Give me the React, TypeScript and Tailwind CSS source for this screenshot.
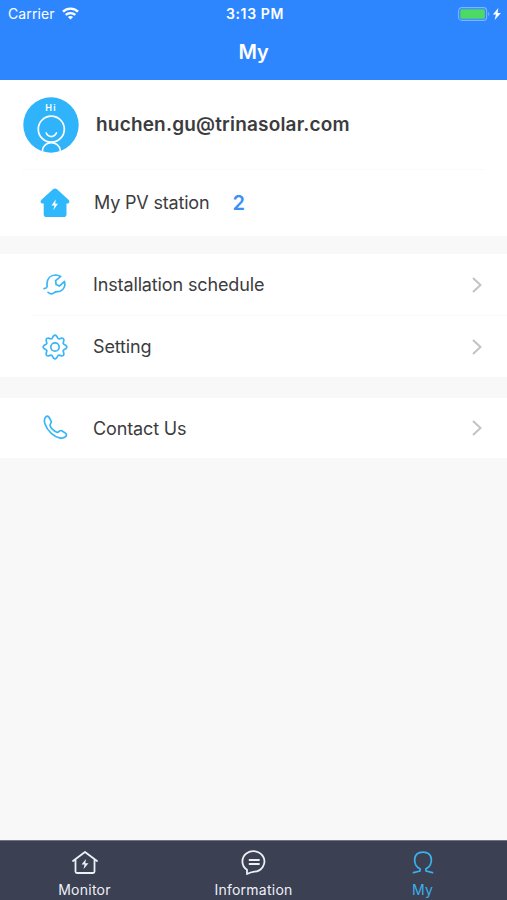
import type { ReactNode } from 'react'

// Eight rounded teeth around the centre of a 26x26 box
const GEAR_POINTS = Array.from({ length: 96 }, (_, i) => {
  const angle = (i / 96) * Math.PI * 2
  const radius = 10.4 + 1.45 * Math.cos(8 * angle)
  return `${(13 + radius * Math.cos(angle)).toFixed(2)},${(13 + radius * Math.sin(angle)).toFixed(2)}`
}).join(' ')

function WifiIcon() {
  return (
    <svg className="h-[13px] w-[17px]" viewBox="0 0 17 13" fill="none" stroke="#fff" strokeWidth="2.3">
      <path d="M1 4.600C5.200.5 11.800.5 16 4.600" />
      <path d="M3.700 7.900c2.700-2.500 6.900-2.500 9.600 0" />
      <path d="M8.500 12.500 5.900 9.900c1.500-1.200 3.700-1.200 5.200 0z" fill="#fff" stroke="none" />
    </svg>
  )
}

function BatteryIcon() {
  return (
    <svg className="h-[14px] w-[44px]" viewBox="0 0 44 14" fill="none">
      <rect x=".6" y=".6" width="28" height="12.800" rx="3.200" stroke="#7fb4ff" strokeWidth="1.100" />
      <rect x="2.300" y="2.300" width="24.600" height="9.400" rx="1.500" fill="#4cd964" />
      <path d="M30.200 5c1.500.5 1.500 3.500 0 4z" fill="#7fb4ff" />
      <path d="M40.300 1 34.900 7.600h3L36.700 13l6.200-7h-3.300z" fill="#fff" />
    </svg>
  )
}

function Avatar() {
  return (
    <div className="relative h-14 w-14 shrink-0">
      <svg className="h-14 w-14" viewBox="0 0 56 56" fill="none" stroke="#fff" strokeWidth="1.700" strokeLinecap="round">
        <circle cx="28" cy="28" r="27.700" fill="#2fb4fc" stroke="none" />
        <circle cx="28.300" cy="32.200" r="13" />
        <path d="M23.200 36c2.200 4.700 8 4.700 10.200 0" />
        <path d="M19.500 53.500c1-10.400 16.600-10.400 17.800 0" />
      </svg>
      <span className="absolute inset-x-0 top-[5px] text-center text-[9px] leading-3 font-semibold tracking-[1.2px] text-white">
        Hi
      </span>
    </div>
  )
}

function HouseIcon() {
  return (
    <svg className="h-[30px] w-[30px]" viewBox="0 0 30 30">
      <path
        d="M13 1.300Q15-.4 17 1.300L28.800 12.100Q30.400 14.500 28 15.400H26.500V26.200Q26.500 29 23.700 29H6.500Q3.700 29 3.700 26.200V15.400H2Q-.4 14.500 1.200 12.100Z"
        fill="#30b8fd"
      />
      <path d="M15.800 11.500 11.500 17.500h3l-1.200 4.800 4.600-6.500h-2.700z" fill="#fff" />
    </svg>
  )
}

function WrenchIcon() {
  return (
    <svg className="h-6 w-6" viewBox="0 0 24 24" fill="none" stroke="#38b6f8" strokeWidth="1.700" strokeLinecap="round" strokeLinejoin="round">
      <path d="M1 15.600C4.400 15.300 4.400 13.300 4 10.500 4.300 5.300 7.800 2.200 12.500 2c2 0 3.700.5 5.300 1.400L12.600 7.600l.5 4 3.200 1.500 5.200-4.600c1.300 4.300-.9 8.500-4.300 9.700-2.200.8-4-.3-5.700 1.200-1.800 1.700-4.300 1.800-6.400 0" />
    </svg>
  )
}

function GearIcon() {
  return (
    <svg className="h-[26px] w-[26px]" viewBox="0 0 26 26" fill="none" stroke="#38b6f8" strokeWidth="1.700" strokeLinejoin="round">
      <polygon points={GEAR_POINTS} />
      <circle cx="13" cy="13" r="4.200" />
    </svg>
  )
}

function PhoneIcon() {
  return (
    <svg className="h-[26px] w-[26px]" viewBox="0 0 26 26" fill="none" stroke="#38b6f8" strokeWidth="1.700" strokeLinejoin="round">
      <path d="M4 1.700C5.500.6 6.600 1.500 7.500 3l1.700 3.300c.7 1.400-1.200 2.300-1.200 4 .3 2.200 4.800 6.900 7.300 7.100 1.700 0 2.200-2.500 4-1.800l4 2.400c1.700 1.100 1.300 2.700.3 3.700-2.800 2.700-9 1.400-14.300-3.400C3.500 13 .3 4.900 4 1.700Z" />
    </svg>
  )
}

function Chevron() {
  return (
    <svg className="ml-auto h-[18px] w-[12px]" viewBox="0 0 12 18" fill="none" stroke="#c3c3c6" strokeWidth="2">
      <path d="m2 2 7.500 7L2 16" />
    </svg>
  )
}

function Row({ icon, label }: { icon: ReactNode; label: string }) {
  return (
    <div className="flex h-full items-center pr-6 pl-[35px]">
      <span className="flex w-[39px] justify-center">{icon}</span>
      <span className="ml-[19px] text-[18px] tracking-[-0.13px]">{label}</span>
      <Chevron />
    </div>
  )
}

const tabs = [
  {
    label: 'Monitor',
    color: 'text-[#eef0f6]',
    icon: (
      <>
        <path d="M2 12 14 3l12 9M4.500 11v11.500q0 1.500 1.500 1.500h16q1.500 0 1.500-1.500V11" />
        <path d="m15 10-4.500 5.500h3L12.600 20l4.900-5.800h-3.200z" fill="currentColor" stroke="none" />
      </>
    ),
  },
  {
    label: 'Information',
    color: 'text-[#eef0f6]',
    icon: (
      <>
        <path d="M7 25V20.800A11 10.300 0 1 1 14.300 22.700Q10.500 23.300 7 25Z" />
        <path d="M9.500 11h9.500M9.500 15h9.500" />
      </>
    ),
  },
  {
    label: 'My',
    color: 'text-[#3cb0ec]',
    icon: (
      <path d="M4.500 23.700 11 22v-2.200C3.500 16.500 3.300 3.200 14 3.200s10.500 13.300 3 16.600V22l6.500 1.700" />
    ),
  },
]

export default function App() {
  return (
    <div className="flex h-screen w-full flex-col overflow-hidden bg-[#f8f8f8] font-['Inter',sans-serif] text-[#3c3c3e]">
      <header className="h-20 shrink-0 bg-[#2e86ff] text-white">
        <div className="grid h-[27px] grid-cols-3 items-center pr-[5px] pl-2">
          <div className="flex items-center gap-[7px] text-[14px] tracking-[0.12px]">
            <span>Carrier</span>
            <WifiIcon />
          </div>
          <div className="text-center text-[14px] font-semibold tracking-[0.6px]">3:13 PM</div>
          <div className="flex justify-end">
            <BatteryIcon />
          </div>
        </div>
        <h1 className="pt-[10px] text-center text-[20px] leading-[30px] font-semibold tracking-[-0.3px]">My</h1>
      </header>

      <section className="h-[156px] shrink-0 bg-white">
        <div className="flex h-[89px] items-center pl-[23px]">
          <Avatar />
          <span className="ml-[17px] pt-[2px] text-[19px] font-semibold tracking-[0.18px]">huchen.gu@trinasolar.com</span>
        </div>
        <div className="mx-[22px] flex h-[67px] items-center border-t border-[#fafafa] pl-[18px]">
          <HouseIcon />
          <span className="ml-[24px] pb-[2px] text-[18px] tracking-[-0.18px]">My PV station</span>
          <span className="ml-[23px] text-[20px] font-semibold text-[#3b8ff5]">2</span>
        </div>
      </section>

      <section className="mt-[18px] h-[123px] shrink-0 bg-white">
        <div className="h-[61px]">
          <Row icon={<WrenchIcon />} label="Installation schedule" />
        </div>
        <div className="ml-[31px] h-px bg-[#f8f8f8]" />
        <div className="h-[61px]">
          <Row icon={<GearIcon />} label="Setting" />
        </div>
      </section>

      <section className="mt-[21px] h-[60px] shrink-0 bg-white">
        <Row icon={<PhoneIcon />} label="Contact Us" />
      </section>

      <nav className="mt-auto grid h-[60px] grid-cols-3 border-t border-[#6d7580] bg-[#3b4053]">
        {tabs.map((tab) => (
          <div key={tab.label} className={`flex flex-col items-center pt-[8px] ${tab.color}`}>
            <svg
              className="h-[28px] w-[28px]"
              viewBox="0 0 28 28"
              fill="none"
              stroke="currentColor"
              strokeWidth="1.800"
              strokeLinecap="round"
              strokeLinejoin="round"
            >
              {tab.icon}
            </svg>
            <span className="mt-[3px] text-[14px] leading-5 tracking-[0.25px]">{tab.label}</span>
          </div>
        ))}
      </nav>
    </div>
  )
}
